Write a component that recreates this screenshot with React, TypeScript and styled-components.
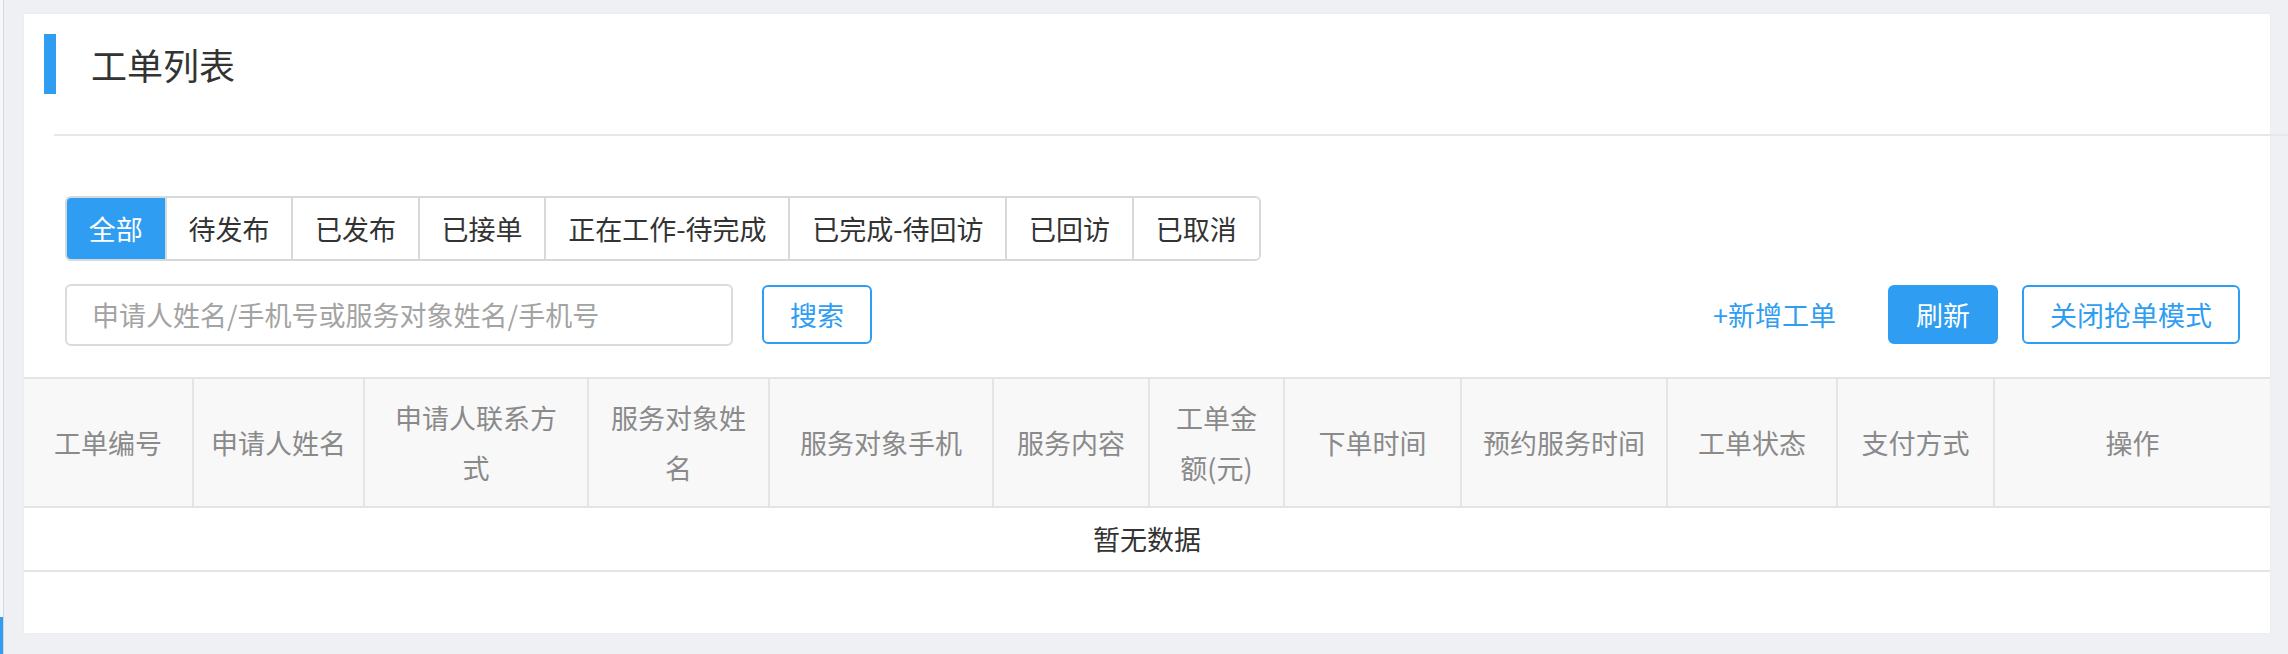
import React from 'react';
import styled, { createGlobalStyle } from 'styled-components';

const GlobalStyle = createGlobalStyle`
  html, body {
    margin: 0;
    padding: 0;
    background: #eef0f3;
    font-family: "Noto Sans CJK SC", "Noto Sans", sans-serif;
    color: #333;
  }
  * { box-sizing: border-box; }
`;

const BLUE = '#2f9df1';

const tabs = ['全部', '待发布', '已发布', '已接单', '正在工作-待完成', '已完成-待回访', '已回访', '已取消'];

const columns = [
  { title: '工单编号', width: 170 },
  { title: '申请人姓名', width: 171 },
  { title: '申请人联系方式', width: 224 },
  { title: '服务对象姓名', width: 181 },
  { title: '服务对象手机', width: 224 },
  { title: '服务内容', width: 156 },
  { title: '工单金额(元)', width: 135 },
  { title: '下单时间', width: 177 },
  { title: '预约服务时间', width: 206 },
  { title: '工单状态', width: 170 },
  { title: '支付方式', width: 157 },
  { title: '操作', width: 275 },
];

export default function App() {
  const [active, setActive] = React.useState(0);
  const [keyword, setKeyword] = React.useState('');

  return (
    <Page>
      <GlobalStyle />
      <Aside>
        <AsideMark />
      </Aside>
      <Main>
        <Card>
          <Header>
            <TitleBar />
            <Title>工单列表</Title>
          </Header>
          <Divider />

          <Filters>
            <TabGroup>
              {tabs.map((t, i) => (
                <Tab key={t} active={i === active} onClick={() => setActive(i)}>
                  {t}
                </Tab>
              ))}
            </TabGroup>

            <Toolbar>
              <SearchBox>
                <SearchInput
                  value={keyword}
                  onChange={(e) => setKeyword(e.target.value)}
                  placeholder="申请人姓名/手机号或服务对象姓名/手机号"
                />
                <Button>搜索</Button>
              </SearchBox>
              <Actions>
                <LinkButton>+新增工单</LinkButton>
                <Button primary>刷新</Button>
                <Button>关闭抢单模式</Button>
              </Actions>
            </Toolbar>
          </Filters>

          <Table>
            <colgroup>
              {columns.map((c) => (
                <col key={c.title} style={{ width: c.width }} />
              ))}
            </colgroup>
            <thead>
              <tr>
                {columns.map((c) => (
                  <Th key={c.title}>{c.title}</Th>
                ))}
              </tr>
            </thead>
            <tbody>
              <tr>
                <EmptyCell colSpan={columns.length}>暂无数据</EmptyCell>
              </tr>
            </tbody>
          </Table>
        </Card>
      </Main>
    </Page>
  );
}

const Page = styled.div`
  display: flex;
  min-height: 100vh;
`;

const Aside = styled.aside`
  width: 4px;
  flex-shrink: 0;
  background: #f6f7f8;
  border-right: 1px solid #d5d7da;
  display: flex;
  flex-direction: column;
  justify-content: flex-end;
`;

const AsideMark = styled.div`
  width: 3px;
  height: 37px;
  background: ${BLUE};
`;

const Main = styled.main`
  flex: 1;
  min-width: 0;
  padding: 14px 18px 0 20px;
`;

const Card = styled.section`
  background: #fff;
  padding: 20px 0 61px;
  box-shadow: 0 0 2px rgba(0, 0, 0, 0.04);
`;

const Header = styled.div`
  display: flex;
  align-items: center;
  height: 60px;
  padding-left: 20px;
`;

const TitleBar = styled.span`
  width: 12px;
  height: 60px;
  background: ${BLUE};
`;

const Title = styled.h1`
  margin: 0 0 0 35px;
  font-size: 36px;
  font-weight: 400;
  line-height: 60px;
  color: #333;
`;

const Divider = styled.div`
  height: 2px;
  margin: 40px -18px 0 30px;
  background: #e6e7e9;
`;

const Filters = styled.div`
  padding: 60px 30px 0 41px;
`;

const TabGroup = styled.div`
  display: inline-flex;
  border: 2px solid #d6d9dc;
  border-radius: 6px;
  overflow: hidden;
  height: 65px;
`;

const Tab = styled.button<{ active?: boolean }>`
  border: none;
  border-left: 2px solid #d6d9dc;
  background: ${(p) => (p.active ? BLUE : '#fff')};
  color: ${(p) => (p.active ? '#fff' : '#333')};
  font-family: inherit;
  font-size: 27px;
  line-height: 61px;
  padding: 0 21.8px;
  cursor: pointer;
  white-space: nowrap;

  &:first-child {
    border-left: none;
  }
`;

const Toolbar = styled.div`
  display: flex;
  align-items: center;
  justify-content: space-between;
  margin-top: 22px;
  height: 63px;
`;

const SearchBox = styled.div`
  display: flex;
  align-items: center;
  gap: 29px;
`;

const SearchInput = styled.input`
  width: 668px;
  height: 62px;
  border: 2px solid #d9dcdf;
  border-radius: 6px;
  padding: 0 25px;
  font-family: inherit;
  font-size: 27px;
  color: #333;
  outline: none;

  &::placeholder {
    color: #a3a3a3;
  }
`;

const Actions = styled.div`
  display: flex;
  align-items: center;
  gap: 24px;
`;

const LinkButton = styled.button`
  border: none;
  background: transparent;
  color: ${BLUE};
  font-family: inherit;
  font-size: 27px;
  padding: 0;
  margin-right: 28px;
  cursor: pointer;
`;

const Button = styled.button<{ primary?: boolean }>`
  height: 59px;
  padding: 0 26px;
  border: 2px solid ${BLUE};
  border-radius: 6px;
  background: ${(p) => (p.primary ? BLUE : '#fff')};
  color: ${(p) => (p.primary ? '#fff' : BLUE)};
  font-family: inherit;
  font-size: 27px;
  cursor: pointer;
  white-space: nowrap;
`;

const Table = styled.table`
  width: 100%;
  margin-top: 31px;
  table-layout: fixed;
  border-collapse: separate;
  border-spacing: 0;
`;

const Th = styled.th`
  background: #f8f8f9;
  color: #8a8a8a;
  font-size: 27px;
  font-weight: 400;
  line-height: 50px;
  padding: 14px 17px 13px;
  border-top: 2px solid #e3e4e6;
  border-bottom: 2px solid #e3e4e6;
  border-right: 2px solid #e3e4e6;
  text-align: center;
  vertical-align: middle;

  &:last-child {
    border-right: none;
  }
`;

const EmptyCell = styled.td`
  height: 64px;
  padding: 0;
  font-size: 27px;
  line-height: 62px;
  text-align: center;
  color: #333;
  border-bottom: 2px solid #e3e4e6;
`;
